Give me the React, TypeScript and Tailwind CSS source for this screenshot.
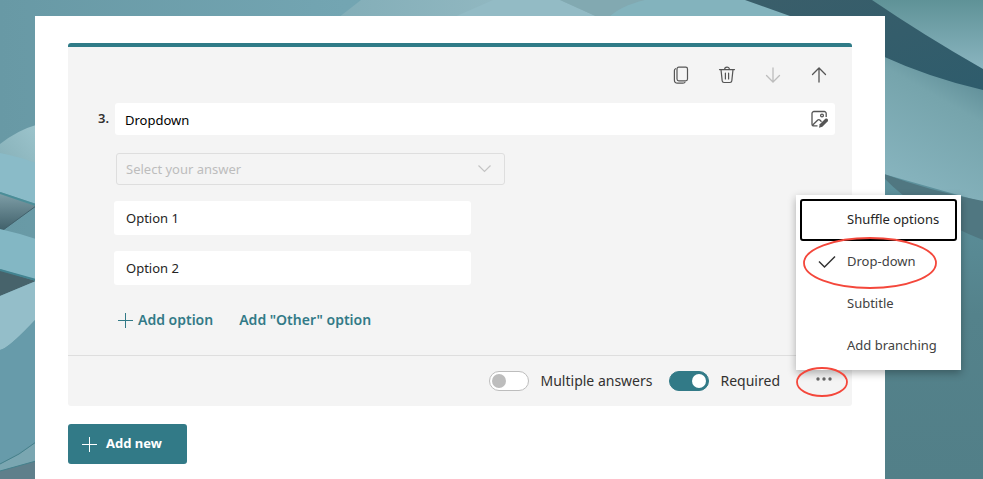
import { useState } from 'react'

const MENU_ITEMS = ['Shuffle options', 'Drop-down', 'Subtitle', 'Add branching']

function Backdrop() {
  return (
    <svg
      className="absolute inset-0 h-full w-full"
      viewBox="0 0 983 479"
      preserveAspectRatio="none"
      aria-hidden="true"
    >
      <defs>
        <linearGradient id="base" x1="0" y1="0" x2="1" y2="0">
          <stop offset="0" stopColor="#6899a5" />
          <stop offset="0.35" stopColor="#73a5b2" />
          <stop offset="1" stopColor="#6b9daa" />
        </linearGradient>
        <linearGradient id="fold" x1="0" y1="0" x2="0" y2="1">
          <stop offset="0" stopColor="#5f9297" />
          <stop offset="1" stopColor="#8ab5c0" />
        </linearGradient>
        <linearGradient id="sheet" x1="1" y1="0" x2="0.6" y2="1">
          <stop offset="0" stopColor="#507f8a" />
          <stop offset="0.4" stopColor="#76a4ac" />
          <stop offset="1" stopColor="#86b3bd" />
        </linearGradient>
        <linearGradient id="deep" x1="0" y1="0" x2="1" y2="1">
          <stop offset="0" stopColor="#3a5e6a" />
          <stop offset="1" stopColor="#2e5c6c" />
        </linearGradient>
        <linearGradient id="lower" x1="0" y1="0" x2="0" y2="1">
          <stop offset="0" stopColor="#5f95a1" />
          <stop offset="0.5" stopColor="#54828b" />
          <stop offset="1" stopColor="#527f88" />
        </linearGradient>
        <linearGradient id="shade" x1="0" y1="0" x2="0" y2="1">
          <stop offset="0" stopColor="#7f9fa8" />
          <stop offset="1" stopColor="#3f5f69" />
        </linearGradient>
        <linearGradient id="arch" x1="0" y1="1" x2="1" y2="0">
          <stop offset="0" stopColor="#86b0b8" />
          <stop offset="1" stopColor="#9cc4cc" />
        </linearGradient>
        <linearGradient id="top" x1="0" y1="0" x2="1" y2="0">
          <stop offset="0" stopColor="#83aeb8" />
          <stop offset="0.6" stopColor="#93b9c2" />
          <stop offset="1" stopColor="#7ba2aa" />
        </linearGradient>
      </defs>
      <rect width="983" height="479" fill="url(#base)" />

      {/* top edge */}
      <path d="M361 0H650V18H338Z" fill="url(#top)" />
      <path d="M493 0H560L600 18H452Z" fill="#93bbc5" />
      <path d="M560 0H650V18H600Z" fill="#82a9b1" />
      <path d="M608 18Q620 6 645 0H760L800 18Z" fill="#83b3bd" />

      {/* right side */}
      <rect x="880" y="150" width="103" height="329" fill="url(#lower)" />
      <path d="M745 0H880L983 60V95L885 60L790 16Z" fill="url(#deep)" />
      <path d="M872 0H983V69Q925 36 872 0Z" fill="url(#fold)" />
      <path d="M880 55Q930 78 983 90V202L880 173Z" fill="url(#sheet)" />
      <path d="M884 174Q930 191 983 201V240Q920 215 884 178Z" fill="#507781" />

      {/* left side */}
      <path d="M0 144Q18 130 36 125V166L0 155Z" fill="url(#arch)" />
      <path d="M0 153Q20 157 36 163V204L0 192Z" fill="#8abbc8" />
      <path d="M0 193L36 206L2 231H0Z" fill="url(#shade)" />
      <path d="M0 193L36 205" stroke="#4b8e98" strokeWidth="2" />
      <path d="M3 230L36 206" stroke="#42616c" strokeWidth="1" />
      <path d="M0 229Q18 233 36 239V280L0 269Z" fill="#83b7c4" />
      <path d="M0 270L36 281L0 296Z" fill="#47636b" />
      <path d="M0 270L36 280" stroke="#438491" strokeWidth="2" />
      <path d="M0 296L36 281V319Q8 349 0 350Z" fill="#94bec9" />
      <path d="M0 350Q8 349 36 319V442L0 464Z" fill="#679baa" />
      <path d="M0 464Q20 455 36 442V461L0 471Z" fill="#7aa6b1" />
      <path d="M0 471L36 461V479H0Z" fill="#5f7f8b" />
      <path d="M0 464Q20 455 36 442M0 471L36 461" fill="none" stroke="#45808c" />
    </svg>
  )
}

function CopyIcon() {
  return (
    <svg width="20" height="20" viewBox="0 0 20 20" fill="none" stroke="currentColor" strokeWidth="1.2">
      <rect x="6" y="2.200" width="10.500" height="13.600" rx="1.800" />
      <path d="M5 3.500C3.700 3.900 3.400 4.600 3.400 5.600v9.400c0 2 1.300 3.200 3.200 3.200h5.400c1.200 0 1.900-.5 2.200-1.300" />
    </svg>
  )
}

function TrashIcon() {
  return (
    <svg width="20" height="20" viewBox="0 0 20 20" fill="none" stroke="currentColor" strokeWidth="1.200" strokeLinecap="round">
      <path d="M2.500 4.600h15M4 4.600l1.200 11.300a1.800 1.800 0 0 0 1.800 1.600h6a1.800 1.800 0 0 0 1.800-1.600L16 4.600M7.600 4.600c0-3.400 4.800-3.400 4.800 0M8.400 8.200v5.800M11.600 8.200v5.800" />
    </svg>
  )
}

function ArrowIcon({ down = false }: { down?: boolean }) {
  return (
    <svg width="20" height="20" viewBox="0 0 20 20" fill="none" stroke="currentColor" strokeWidth="1.3" strokeLinecap="round">
      <path d={down ? 'M10 3v14M3.500 10.500L10 17l6.500-6.500' : 'M10 17V3M3.500 9.500L10 3l6.500 6.500'} />
    </svg>
  )
}

function ImageEditIcon() {
  return (
    <svg width="20" height="20" viewBox="0 0 20 20" fill="none" stroke="currentColor" strokeWidth="1.300">
      <path d="M17.200 8V4.500a2 2 0 0 0-2-2H5a2 2 0 0 0-2 2v10.400a2 2 0 0 0 2 2h3.500" />
      <circle cx="13" cy="6.500" r="1.400" />
      <path d="M3.700 16l5.100-5a1.400 1.400 0 0 1 2 0l1.700 1.700" />
      <path d="M10 18.800l.7-3.500 5.400-5.300c1.800-1.400 3.900.6 2.500 2.500l-5.300 5.300z" fill="currentColor" stroke="none" />
    </svg>
  )
}

function PlusIcon() {
  return (
    <svg width="15" height="15" viewBox="0 0 15 15" stroke="currentColor" aria-hidden="true">
      <path d="M0 7.500h15M7.500 0v15" />
    </svg>
  )
}

interface ToggleProps {
  label: string
  checked: boolean
  onChange: (value: boolean) => void
}

function Toggle({ label, checked, onChange }: ToggleProps) {
  return (
    <label className="flex items-center gap-3 text-sm text-[#323130]">
      <input
        type="checkbox"
        role="switch"
        checked={checked}
        onChange={(e) => onChange(e.target.checked)}
        className="h-5 w-10 appearance-none rounded-full border border-[#bdbdbd] bg-white p-[2px] before:block before:size-[14px] before:rounded-full before:bg-[#bdbdbd] checked:border-[#327a87] checked:bg-[#327a87] checked:before:ml-5 checked:before:bg-white"
      />
      {label}
    </label>
  )
}

function OptionsMenu() {
  return (
    <div
      role="menu"
      className="absolute right-[-129px] bottom-[21px] flex w-[165px] flex-col bg-white px-1 pt-1 pb-[3px] text-[13px] text-[#424242] shadow-[0_3px_8px_rgba(0,0,0,0.3)]"
    >
      {MENU_ITEMS.map((item) => (
        <button
          key={item}
          type="button"
          role="menuitem"
          className="flex h-[42px] w-[157px] items-center rounded-[3px] border-2 border-transparent pl-4 whitespace-nowrap first:border-black first:text-[#242424]"
        >
          <span className="w-[29px]">
            {item === 'Drop-down' && (
              <svg width="18" height="14" viewBox="0 0 18 14" fill="none" stroke="#333" strokeWidth="1.500">
                <path d="M1 6.500L6.500 12L17 1.500" />
              </svg>
            )}
          </span>
          {item}
        </button>
      ))}
    </div>
  )
}

export default function App() {
  const [title, setTitle] = useState('Dropdown')
  const [options, setOptions] = useState(['Option 1', 'Option 2'])
  const [multiple, setMultiple] = useState(false)
  const [required, setRequired] = useState(true)

  return (
    <div className="relative flex min-h-screen overflow-hidden pt-4 pr-[98px] pl-[35px] font-['Noto_Sans',sans-serif]">
      <Backdrop />
      <main className="relative flex-1 bg-white pt-[27px] pr-[33px] pl-[33px]">
        <section className="rounded-[3px] border-t-4 border-[#2f7b87] bg-[#f4f4f4]">
          <div className="pt-3 pr-[17px]">
            {/* Question actions */}
            <div className="flex justify-end gap-[14px] text-[#555]">
              <button type="button" aria-label="Copy question" className="grid size-8 place-items-center">
                <CopyIcon />
              </button>
              <button type="button" aria-label="Delete question" className="grid size-8 place-items-center">
                <TrashIcon />
              </button>
              <button type="button" aria-label="Move down" className="grid size-8 place-items-center text-[#bdbdbd]">
                <ArrowIcon down />
              </button>
              <button type="button" aria-label="Move up" className="grid size-8 place-items-center">
                <ArrowIcon />
              </button>
            </div>

            <div className="mt-3 flex items-center">
              <label htmlFor="question" className="w-[47px] pl-[30px] text-[13px] font-semibold text-[#323130]">
                3.
              </label>
              <div className="flex h-8 flex-1 items-center rounded-[3px] bg-white pr-[6px] pl-[10px]">
                <input
                  id="question"
                  value={title}
                  onChange={(e) => setTitle(e.target.value)}
                  className="h-8 min-w-0 flex-1 pt-px text-[13px] text-black outline-none"
                />
                <button type="button" aria-label="Insert media" className="text-[#555]">
                  <ImageEditIcon />
                </button>
              </div>
            </div>

            <div className="pl-[46px]">
              <div className="relative mt-[18px] ml-[2px] w-[389px] max-w-full">
                <select
                  disabled
                  aria-label="Answer"
                  className="block h-8 w-full appearance-none rounded-[3px] border border-[#dedede] px-[9px] pt-[2px] text-[13px] text-[#bdbdbd] opacity-100"
                >
                  <option>Select your answer</option>
                </select>
                <svg
                  className="pointer-events-none absolute top-3 right-[14px]"
                  width="13"
                  height="8"
                  viewBox="0 0 13 8"
                  fill="none"
                  stroke="#c4c4c4"
                  strokeWidth="1.200"
                >
                  <path d="M.5.5l6 6 6-6" />
                </svg>
              </div>

              {options.map((option, i) => (
                <input
                  key={i}
                  aria-label={`Option ${i + 1} text`}
                  value={option}
                  onChange={(e) => setOptions(options.map((o, j) => (j === i ? e.target.value : o)))}
                  className="mt-4 block h-[34px] w-[357px] max-w-full rounded-[3px] bg-white px-3 text-[13px] text-[#242424] outline-none"
                />
              ))}

              <div className="mt-[19px] mb-[19px] ml-1 flex h-8 items-center gap-[26px] text-sm font-semibold text-[#327a87]">
                <button
                  type="button"
                  className="flex items-center gap-[5px]"
                  onClick={() => setOptions([...options, `Option ${options.length + 1}`])}
                >
                  <PlusIcon />
                  Add option
                </button>
                <button type="button">Add "Other" option</button>
              </div>
            </div>
          </div>

          <footer className="flex h-[51px] items-center justify-end gap-4 border-t border-[#dedede] pr-[20px]">
            <Toggle label="Multiple answers" checked={multiple} onChange={setMultiple} />
            <Toggle label="Required" checked={required} onChange={setRequired} />
            <div className="relative ml-5 flex">
              <button type="button" aria-label="More settings" className="text-[#666]">
                <svg width="16" height="20" viewBox="0 0 16 20" fill="currentColor">
                  <circle cx="2" cy="8" r="1.700" />
                  <circle cx="8" cy="8" r="1.700" />
                  <circle cx="14" cy="8" r="1.700" />
                </svg>
              </button>
              <OptionsMenu />

              {/* Highlight rings */}
              <svg
                className="pointer-events-none absolute right-[-106px] bottom-[-7px]"
                width="136"
                height="162"
                viewBox="0 0 136 162"
                fill="none"
                stroke="#f4473b"
                strokeWidth="1.800"
              >
                <ellipse cx="68" cy="27" rx="66" ry="25" />
              </svg>
              <svg
                className="pointer-events-none absolute right-[-16px] bottom-[-7px]"
                width="52"
                height="32"
                viewBox="0 0 52 32"
                fill="none"
                stroke="#f4473b"
                strokeWidth="1.800"
              >
                <ellipse cx="26" cy="16" rx="25" ry="14" />
              </svg>
            </div>
          </footer>
        </section>

        <button
          type="button"
          className="mt-[18px] flex h-10 items-center gap-[9px] rounded-[3px] bg-[#327a87] pr-[25px] pl-[14px] text-[13px] font-bold text-white"
        >
          <PlusIcon />
          Add new
        </button>
      </main>
    </div>
  )
}
